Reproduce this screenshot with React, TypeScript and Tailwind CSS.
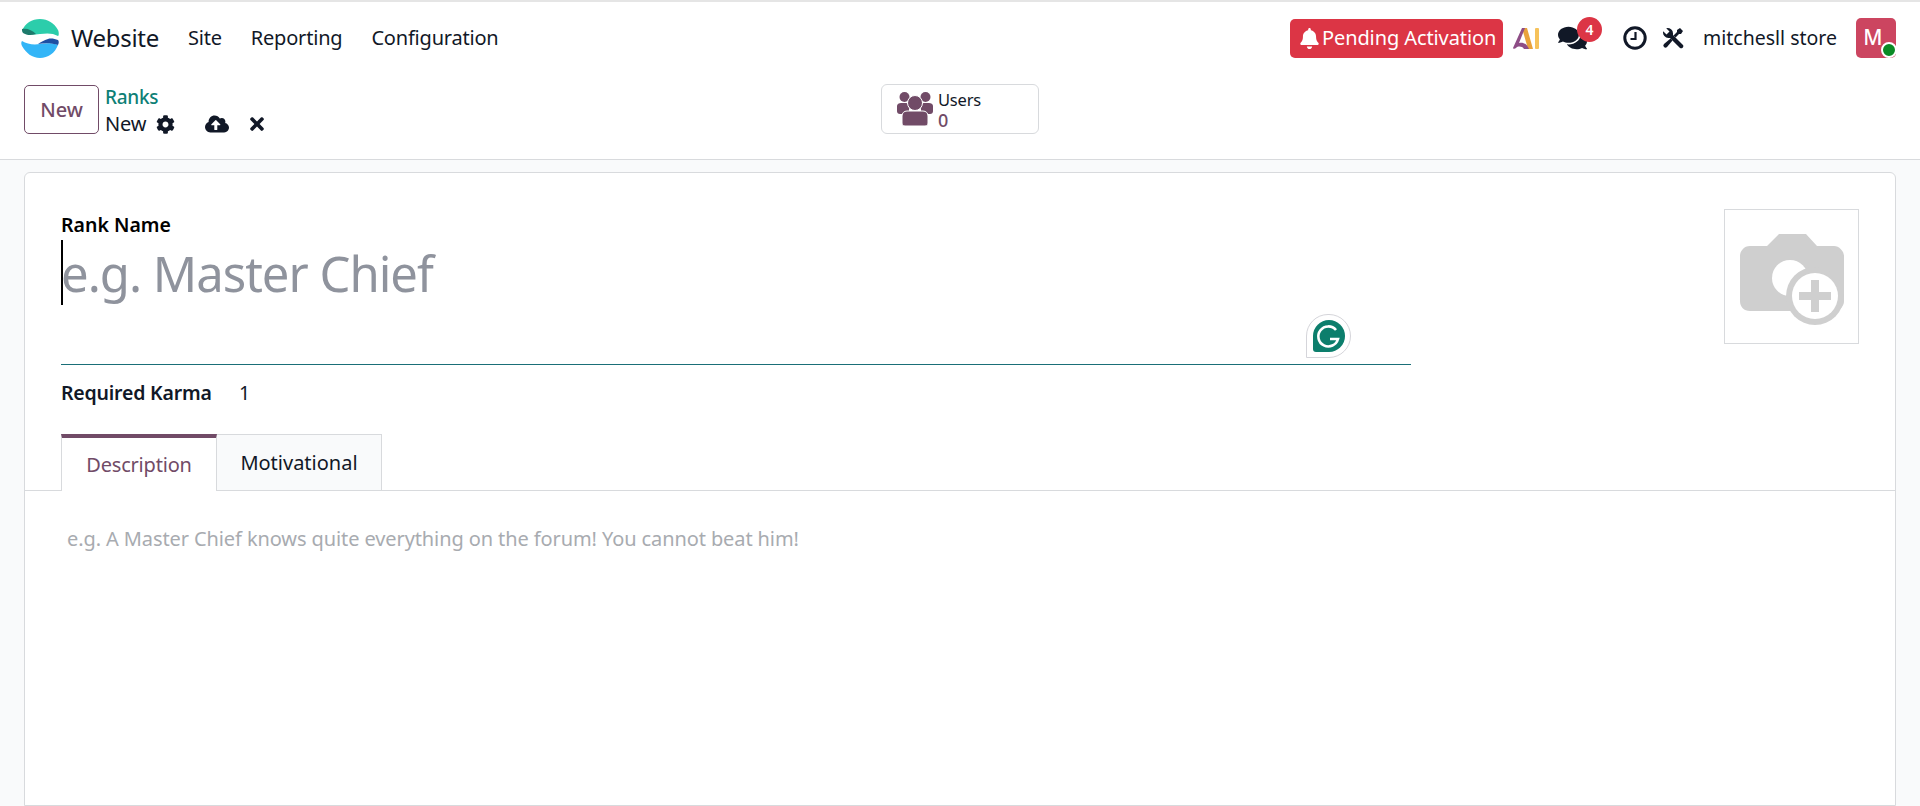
import React from 'react';
import { FaBell, FaCloudUploadAlt, FaCog, FaComments, FaTimes } from 'react-icons/fa';

function Logo() {
  return (
    <svg viewBox="0 0 38 40" className="w-[38px] h-[40px]">
      <path d="M1 13C4 5 11 1 19 1s14 4 18 11c1 2 1 6 0 6-5-3-11-3-18-2-6 1-12 0-18-3z" fill="#2ccdab" />
      <path d="M1 11c5-1 10 1 14 5-5 2-10 1-13-1-1-1-1-3-1-4z" fill="#1d7a6b" />
      <path d="M1 23c5 3 11 4 18 3s13-1 18 1c-3 8-10 13-18 13S5 35 1 28c-1-2-1-4 0-5z" fill="#33b5f7" />
      <path d="M17 26c7-1 14-1 20 1 1-2 1-4 0-5-3-1-7-2-10-1-4 1-7 3-10 5z" fill="#1e4fa3" />
    </svg>
  );
}

function AiMark() {
  return (
    <svg viewBox="0 0 26 21" className="w-[26px] h-[21px]">
      <path d="M9 0h5l6 21h-5z" fill="#e9a23b" />
      <path d="M9 0h3L6 15c3-1 8 0 10 6h-5c-2-3-6-3-8-1-1 1-3 1-3 0z" fill="#8e4d86" />
      <rect x="22" y="0" width="4" height="21" rx="1" fill="#f6c25b" />
    </svg>
  );
}

function ClockGlyph() {
  return (
    <svg viewBox="0 0 24 24" className="w-[24px] h-[24px]" fill="none" stroke="#111827">
      <circle cx="12" cy="12" r="10.2" strokeWidth="3" />
      <path d="M12.5 6v7H7.5" strokeWidth="2.2" />
    </svg>
  );
}

function ToolsGlyph() {
  return (
    <svg viewBox="0 0 22 22" className="w-[22px] h-[22px]" fill="#111827">
      <path d="M1.2 4.2 4.5 7.5l3-3-3.300-3.300A5.500 5.500 0 0 1 11 7v1l10 10a2.200 2.200 0 0 1-3 3L8 11H7A5.500 5.500 0 0 1 1.200 4.200z" />
      <path d="M18 1l3 3-2 3h-2l-3.500 3.500-2-2L15 5V3z" />
      <path d="M8.500 11.500l2 2L5 20a2 2 0 0 1-3-3z" />
    </svg>
  );
}

function UsersGlyph() {
  return (
    <svg viewBox="0 0 36 36" className="w-[36px] h-[36px]" fill="#714b67">
      <circle cx="7.5" cy="6" r="5" />
      <circle cx="28.5" cy="6" r="5" />
      <path d="M0 15c0-2 2-3 4-3h5c2 0 3 1 3 3v8H3c-2 0-3-1-3-3z" />
      <path d="M36 15c0-2-2-3-4-3h-5c-2 0-3 1-3 3v8h9c2 0 3-1 3-3z" />
      <circle cx="18" cy="12" r="7.5" stroke="#fff" strokeWidth="1" />
      <path d="M5 25c0-3 2-5 5-5h16c3 0 5 2 5 5v7c0 2-1 3-3 3H8c-2 0-3-1-3-3z" stroke="#fff" strokeWidth="1" />
    </svg>
  );
}

function CameraPlaceholder() {
  return (
    <svg viewBox="0 0 104 92" className="w-[104px] h-[92px]">
      <path
        d="M10 12h17L39 0h27l11 12h17c5 0 10 5 10 10v45c0 6-5 10-10 10H10C4 77 0 73 0 67V22c0-5 4-10 10-10z"
        fill="#cfcfcf"
      />
      <circle cx="50" cy="44" r="18" fill="#fff" />
      <circle cx="75" cy="62" r="29" fill="#cfcfcf" />
      <circle cx="75" cy="62" r="23" fill="#fff" />
      <rect x="59" y="58" width="32" height="8" fill="#cfcfcf" />
      <rect x="71" y="46" width="8" height="32" fill="#cfcfcf" />
    </svg>
  );
}

function GrammarlyBadge() {
  return (
    <div className="absolute left-[1245px] top-[-51px] w-[45px] h-[44px] rounded-full rounded-bl-none bg-white border border-[#d5d5da] flex items-center justify-center">
      <svg viewBox="0 0 32 32" className="w-[32px] h-[32px]">
        <path d="M16 0a16 16 0 0 1 0 32H3a3 3 0 0 1-3-3V16A16 16 0 0 1 16 0z" fill="#0c7e6c" />
        <path d="M23 10a10 10 0 1 0 2 9h-8" fill="none" stroke="#fff" strokeWidth="2.6" />
      </svg>
    </div>
  );
}

export default function App() {
  return (
    <div className="h-[806px] overflow-hidden bg-[#f9fafb] text-[#111827] font-['Noto_Sans','Open_Sans',sans-serif] flex flex-col">
      <div className="bg-white border-t-2 border-[#e5e5e5] border-b border-b-[#d8dadd]">
        <nav className="h-[72px] flex items-center pl-[21px] pr-[24px]">
          <Logo />
          <span className="ml-[12px] text-[24px] tracking-[-0.3px]">Website</span>
          <div className="ml-[29px] flex gap-[29px] text-[20px] tracking-[-0.2px]">
            <span>Site</span>
            <span>Reporting</span>
            <span>Configuration</span>
          </div>
          <div className="ml-auto flex items-center">
            <div className="h-[39px] w-[213px] rounded-[5px] bg-[#dc3545] text-white flex items-center pl-[9px] text-[20px] tracking-[-0.1px] whitespace-nowrap">
              <FaBell className="shrink-0 w-[21px] h-[21px] mr-[2px]" />
              Pending Activation
            </div>
            <div className="ml-[10px]">
              <AiMark />
            </div>
            <div className="relative ml-[19px] w-[29px] h-[22px] flex items-center">
              <FaComments className="w-[29px] h-[26px] text-[#111827]" />
              <span className="absolute left-[19px] top-[-10px] w-[25px] h-[25px] rounded-full bg-[#dc3545] text-white text-[14px] font-semibold flex items-center justify-center">
                4
              </span>
            </div>
            <div className="ml-[36px]">
              <ClockGlyph />
            </div>
            <div className="ml-[15px]">
              <ToolsGlyph />
            </div>
            <span className="ml-[19px] text-[19.5px]">mitchesll store</span>
            <div className="relative ml-[19px] w-[40px] h-[40px] rounded-[5px] bg-[#cc4560] text-white text-[21px] font-medium flex items-center justify-center pr-[6px]">
              M
              <span className="absolute right-[-1px] bottom-[0px] w-[16px] h-[16px] rounded-full bg-[#0a8a24] border-2 border-white" />
            </div>
          </div>
        </nav>
        <div className="h-[85px] relative flex items-start pl-[24px] pt-[11px]">
          <button className="w-[75px] h-[49px] rounded-[5px] border border-[#714b67] text-[#714b67] text-[20px] font-medium">
            New
          </button>
          <div className="ml-[6px]">
            <div className="text-[#0e7f76] text-[19px] font-medium leading-[24px] tracking-[-0.3px]">Ranks</div>
            <div className="flex items-center text-[20px] leading-[28px] tracking-[-0.2px] mt-[1px]">
              New
              <FaCog className="ml-[10px] w-[19px] h-[19px]" />
              <FaCloudUploadAlt className="ml-[30px] w-[24px] h-[24px]" />
              <FaTimes className="ml-[18px] w-[20px] h-[20px]" />
            </div>
          </div>
          <div className="absolute left-[881px] top-[10px] w-[158px] h-[50px] rounded-[6px] border border-[#d8dadd] flex items-center pl-[15px]">
            <UsersGlyph />
            <div className="ml-[5px] pt-[2px] text-[16.5px] leading-[20px] tracking-[-0.2px]">
              <div>Users</div>
              <div className="text-[#714b67] font-medium text-[18px]">0</div>
            </div>
          </div>
        </div>
      </div>

      <main className="mx-[24px] mt-[12px] flex-1 bg-white border border-[#d8dadd] rounded-t-[6px]">
        <div className="flex justify-between pl-[36px] pr-[36px] pt-[36px]">
          <div className="w-[1350px]">
            <label className="block text-[19.5px] leading-[26px] font-semibold text-black mt-[3px]">Rank Name</label>
            <div className="relative h-[126px] text-[49px] leading-[64px] text-[#8f939d] tracking-[-1px] pt-[3px]">
              <span className="absolute left-0 top-[2px] w-[2px] h-[65px] bg-black" />
              e.g. Master Chief
            </div>
            <div className="relative border-t border-[#1a6f78]">
              <GrammarlyBadge />
            </div>
          </div>
          <div className="w-[135px] h-[135px] border border-[#d8dadd] flex items-center justify-center pt-[6px]">
            <CameraPlaceholder />
          </div>
        </div>

        <div className="mt-[15px] pl-[36px] flex items-center text-[19.5px] leading-[26px]">
          <span className="w-[178px] font-semibold tracking-[-0.2px] whitespace-nowrap">Required Karma</span>
          <span>1</span>
        </div>

        <div className="mt-[28px] border-b border-[#d8dadd] pl-[36px] flex h-[57px]">
          <div className="w-[156px] h-[57px] border-x border-[#d8dadd] border-t-[4px] border-t-[#714b67] bg-white text-[#714b67] text-[20px] flex items-center justify-center tracking-[-0.2px]">
            Description
          </div>
          <div className="w-[165px] h-[56px] border-r border-t border-[#d8dadd] bg-[#f9fafb] text-[20px] flex items-center justify-center">
            Motivational
          </div>
        </div>

        <p className="mt-[35px] pl-[42px] text-[20px] leading-[26px] text-[#a8abb0] tracking-[-0.1px]">
          e.g. A Master Chief knows quite everything on the forum! You cannot beat him!
        </p>
      </main>
    </div>
  );
}
